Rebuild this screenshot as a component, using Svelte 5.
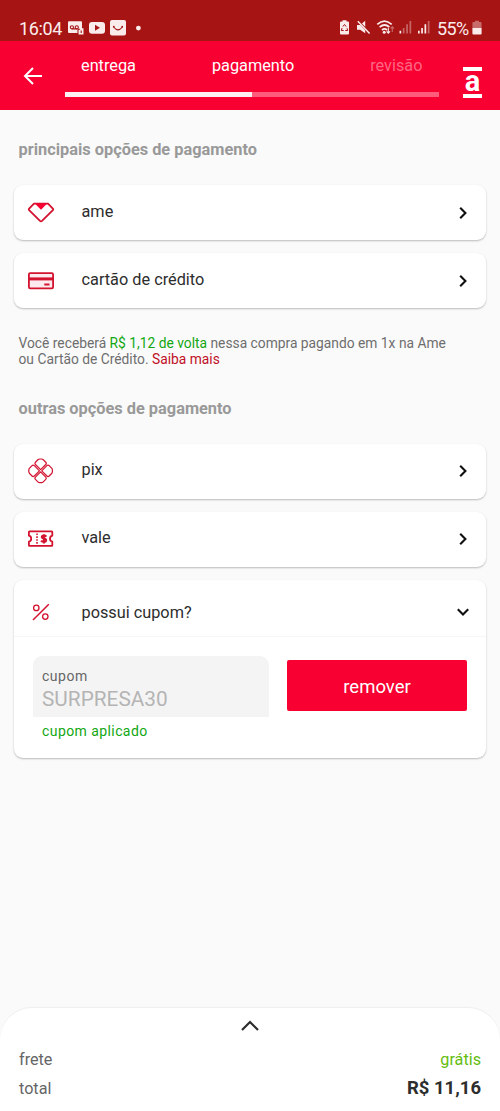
<script>
	let couponOpen = $state(true);

	const steps = [
		{ label: "entrega", done: true },
		{ label: "pagamento", done: true },
		{ label: "revisão", done: false }
	];

	const mainOptions = [
		{ icon: "ame", label: "ame" },
		{ icon: "card", label: "cartão de crédito" }
	];

	const otherOptions = [
		{ icon: "pix", label: "pix" },
		{ icon: "voucher", label: "vale" }
	];
</script>

{#snippet icon(name)}
	<svg class="icon" viewBox="0 0 28 28" fill="none" stroke="#d3122f" stroke-width="1.8" stroke-linejoin="round">
		{#if name === "ame"}
			<path d="M7 4.6h14l5.1 5.3q.4.7-.2 1.3L15 21.9q-1 .9-2 0L2.1 11.2q-.6-.6-.2-1.3z" />
			<path d="M7.8 4.6h12.4L14 10.8z" fill="#f80032" stroke="none" />
		{:else if name === "card"}
			<rect x="1.9" y="6.1" width="24.2" height="15.2" rx="1.3" fill="#fdeaee" />
			<path d="M2 11.9h24" stroke-width="3" />
			<path d="M17.3 17.5h5.2" stroke-width="2" />
		{:else if name === "pix"}
			<g transform="translate(13.6 13.8)" stroke-width="1.2">
				{#each [45, 135, 225, 315] as angle}
					<path
						transform="rotate({angle})"
						d="M.8.8h7.3Q9.7.8 9.7 2.4v3.5Q9.7 7 8.9 7.8L7.8 8.9Q7 9.7 5.9 9.7H2.4Q.8 9.7.8 8.1z"
					/>
				{/each}
			</g>
		{:else if name === "voucher"}
			<path d="M2.5 6.4h22.2q.6 0 .6.6v3.7q-2.3.6-2.3 3t2.3 3v3.6q0 .6-.6.6H2.5q-.6 0-.6-.6v-3.6q2.3-.6 2.3-3t-2.3-3V7q0-.6.6-.6z" />
			<path d="M10 8.4v11" stroke-width="1.6" stroke-dasharray="1.6 1.3" />
			<path d="M19.4 11.6q-1-1.1-2.7-1-2 .1-1.9 1.6.1 1.1 2 1.4 2.4.4 2.4 1.6-.1 1.6-2.3 1.6-1.9 0-2.8-1.2M16.9 9.2v9.2" stroke-width="2" />
		{:else if name === "percent"}
			<path d="M6 22 21.8 6.2" stroke-width="1.5" />
			<circle cx="9.3" cy="9.9" r="2.7" stroke-width="1.3" />
			<circle cx="18.3" cy="18.6" r="2.7" stroke-width="1.3" />
		{/if}
	</svg>
{/snippet}

{#snippet optionCard(option)}
	<button class="card option">
		{@render icon(option.icon)}
		<span class="option-label">{option.label}</span>
		<svg class="chevron" viewBox="0 0 14 14"><path d="m4.2 1.8 5.2 5.2-5.2 5.2" /></svg>
	</button>
{/snippet}

<div class="screen">
	<div class="status-bar">
		<span class="clock">16:04</span>
		<svg class="notifications" viewBox="0 0 76 18" fill="#fbecec">
			<path d="M2 2.2h12q1 0 1 1v6h1.5v6.2h-5v-1.3H2q-1 0-1-1v-10q0-.9 1-.9z" />
			<g fill="none" stroke="#a61414" stroke-width="1.1">
				<circle cx="4.9" cy="8.3" r="1.6" />
				<circle cx="9.8" cy="8.3" r="1.6" />
				<path d="M4.9 9.9h5M11 14v-3.7h2.1M14.2 11.4v2.6" />
			</g>
			<rect x="22" y="3" width="16" height="11.7" rx="3" />
			<path d="m28 5.8 5 3-5 3z" fill="#a61414" />
			<rect x="43" y="1" width="16" height="15.5" rx="2" />
			<path d="M46.6 8q4.4 5.6 8.8 0" fill="none" stroke="#a61414" stroke-width="1.2" />
			<circle cx="46.8" cy="7.7" r=".9" fill="#a61414" />
			<circle cx="55.2" cy="7.7" r=".9" fill="#a61414" />
			<circle cx="71.4" cy="9.1" r="2.4" />
		</svg>
		<svg class="indicators" viewBox="0 0 94 18" fill="#fbecec">
			<path d="M3.5 2.5V1.2h4v1.3H9q1 0 1 1v11q0 1-1 1H2q-1 0-1-1v-11q0-1 1-1z" />
			<path d="m3.9 7.5 1.6-2 1.7 2.1M8 9.2l.7 2.3H6.3M4.7 11.5H2.3L3.1 9" fill="none" stroke="#a61414" stroke-width="1" />
			<path d="M18 6h3.2l5-4.2v12.5l-5-3.6H18z" />
			<path d="m18.6 1.5 12 12.8" stroke="#a61414" stroke-width="2.4" />
			<path d="m18.8 2.3 11.8 12.3" stroke="#fbecec" stroke-width="1.5" />
			<g fill="none" stroke="#fbecec" stroke-width="1.7">
				<path d="M38.3 5.3q7-6.5 14.4 0M40.6 8.2q5-4.4 9.8 0M43 11q2.6-2.2 5 0" />
				<path d="M49.3 9v5M47.6 12.3l1.7 1.9 1.7-1.9" stroke-width="1.1" />
				<path d="M53.3 13V7.9M51.6 9.5l1.7-1.8L55 9.5" stroke-width="1.1" opacity=".4" />
			</g>
			<circle cx="45.2" cy="13.3" r="1.5" />
			<g opacity=".38">
				<path d="M63.8 9h1.7v5.6h-1.7zM67.2 5.3h1.7v9.3h-1.7zM70.5 2h1.7v12.6h-1.7zM88.8 2h1.7v12.6h-1.7z" />
			</g>
			<path d="M60.5 11.8h1.7v2.8h-1.7zM79 11.8h1.7v2.8H79zM82.2 9h1.7v5.6h-1.7zM85.5 5.3h1.7v9.3h-1.7z" />
		</svg>
		<span class="percent">55%</span>
		<svg class="battery" viewBox="0 0 10 16" fill="#fbecec">
			<path d="M3 1.9V.8h4v1.1h1.6q1 0 1 1v5H.4v-5q0-1 1-1z" opacity=".4" />
			<path d="M.4 7.9h9.2v5.7q0 1-1 1H1.4q-1 0-1-1z" />
		</svg>
	</div>

	<header class="top-bar">
		<button class="back" aria-label="voltar">
			<svg viewBox="0 0 20 20"><path d="M19 10H2M10 2l-8 8 8 8" /></svg>
		</button>
		<div class="progress">
			<div class="steps">
				{#each steps as step}
					<span class="step" class:pending={!step.done}>{step.label}</span>
				{/each}
			</div>
			<div class="track"><div class="fill"></div></div>
		</div>
		<div class="logo"><span>a</span></div>
	</header>

	<main>
		<h2>principais opções de pagamento</h2>
		<div class="cards">
			{#each mainOptions as option}
				{@render optionCard(option)}
			{/each}
		</div>

		<p class="cashback">
			Você receberá <span class="amount">R$ 1,12 de volta</span> nessa compra pagando em 1x na Ame<br />
			ou Cartão de Crédito. <a href="#mais">Saiba mais</a>
		</p>

		<h2>outras opções de pagamento</h2>
		<div class="cards">
			{#each otherOptions as option}
				{@render optionCard(option)}
			{/each}

			<section class="card coupon">
				<button class="option coupon-toggle" onclick={() => (couponOpen = !couponOpen)}>
					{@render icon("percent")}
					<span class="option-label">possui cupom?</span>
					<svg class="chevron" viewBox="0 0 14 14"><path d="M1.8 4.2 7 9.4l5.2-5.2" /></svg>
				</button>
				{#if couponOpen}
					<div class="coupon-body">
						<div class="field-group">
							<div class="field">
								<span class="field-label">cupom</span>
								<span class="field-value">SURPRESA30</span>
							</div>
							<span class="field-message">cupom aplicado</span>
						</div>
						<button class="remove">remover</button>
					</div>
				{/if}
			</section>
		</div>
	</main>

	<footer>
		<svg class="expand" viewBox="0 0 20 12"><path d="m2 10 8-8 8 8" /></svg>
		<div class="row">
			<span>frete</span>
			<span class="free">grátis</span>
		</div>
		<div class="row total">
			<span>total</span>
			<strong>R$ 11,16</strong>
		</div>
	</footer>
</div>

<style>
	:global(body) {
		background: #fafafa;
	}

	.screen {
		display: flex;
		flex-direction: column;
		width: 500px;
		height: 1111px;
		overflow: hidden;
		background: #fafafa;
		font-family: Roboto, "Liberation Sans", sans-serif;
		font-size: 16px;
		color: #2d2d2d;
	}

	button {
		margin: 0;
		padding: 0;
		border: 0;
		background: none;
		font: inherit;
		color: inherit;
		text-align: left;
	}

	svg {
		display: block;
		flex: none;
	}

	.status-bar {
		display: flex;
		align-items: center;
		box-sizing: border-box;
		height: 41px;
		padding: 15px 18px 0 19px;
		background: #a61414;
		color: #fbecec;
		font-size: 18px;
		line-height: 26px;
	}

	.clock {
		width: 48px;
		padding-top: 1px;
		letter-spacing: -0.35px;
	}

	.notifications {
		width: 76px;
		height: 18px;
	}

	.indicators {
		width: 94px;
		height: 18px;
		margin-left: auto;
	}

	.percent {
		width: 35px;
		padding-top: 1px;
		margin-left: 4px;
		letter-spacing: -0.6px;
	}

	.battery {
		width: 10px;
		height: 16px;
	}

	.top-bar {
		display: flex;
		height: 69px;
		flex: none;
		background: #f80032;
		color: #fff;
	}

	.back {
		width: 65px;
		padding: 0 0 0 22.5px;
		box-sizing: border-box;
	}

	.back svg {
		width: 20px;
		height: 20px;
		fill: none;
		stroke: #fff;
		stroke-width: 2;
	}

	.progress {
		width: 373.5px;
	}

	.steps {
		display: flex;
		justify-content: space-between;
		padding: 15px 16px 0;
		line-height: 20px;
		font-size: 16.3px;
	}

	.pending {
		color: #ff6683;
	}

	.track {
		height: 5px;
		margin-top: 16px;
		background: #ff5c7c;
	}

	.fill {
		width: 50%;
		height: 100%;
		background: #ffeef2;
	}

	.logo {
		box-sizing: border-box;
		width: 19px;
		height: 31px;
		margin: 26px 0 0 24.5px;
		border: solid #fff;
		border-width: 4px 0;
		font: bold 29px/20px Roboto, sans-serif;
		text-align: center;
	}

	main {
		flex: 1;
		padding: 30px 14px 0;
	}

	h2 {
		margin: 0 4.5px;
		font-size: 16.35px;
		line-height: 20px;
		font-weight: 700;
		color: #999;
	}

	.cards {
		display: flex;
		flex-direction: column;
		gap: 13px;
		margin-top: 25px;
	}

	.card {
		border-radius: 9px;
		background: #fff;
		box-shadow: 0 1px 2px rgba(0, 0, 0, 0.26);
	}

	.option {
		display: flex;
		align-items: center;
		box-sizing: border-box;
		width: 100%;
		height: 55px;
		padding: 0 16.5px 0 13px;
	}

	.icon {
		width: 28px;
		height: 28px;
	}

	.option-label {
		flex: 1;
		margin: 0 0 2px 26.5px;
		font-size: 16.3px;
		line-height: 20px;
	}

	.chevron {
		width: 14px;
		height: 14px;
		fill: none;
		stroke: #111;
		stroke-width: 2.1;
	}

	.cashback {
		margin: 27px 4.5px 31px;
		font-size: 13.8px;
		line-height: 16.4px;
		color: #6e6e6e;
	}

	.amount {
		color: #12a812;
	}

	.cashback a {
		color: #c01025;
		text-decoration: none;
	}

	.coupon {
		height: 178px;
	}

	.coupon-toggle {
		height: 57px;
		padding-top: 8px;
		border-bottom: 1px solid #f7f7f7;
	}

	.coupon-toggle .option-label {
		margin: 2px 0 0 26.5px;
	}

	.coupon-body {
		display: flex;
		gap: 18.5px;
		padding: 19px 19px 0;
	}

	.field-group {
		width: 235.5px;
	}

	.field {
		box-sizing: border-box;
		height: 61px;
		padding: 10px 9px 0;
		border-radius: 9px 9px 0 0;
		background: #f4f4f4;
	}

	.field-label,
	.field-value,
	.field-message {
		display: block;
	}

	.field-label {
		font-size: 14px;
		line-height: 20px;
		letter-spacing: 0.5px;
		color: #666;
	}

	.field-value {
		font-size: 20.8px;
		line-height: 26px;
		color: #b4b4b4;
	}

	.field-message {
		margin: 4px 9px 0;
		font-size: 14px;
		line-height: 20px;
		letter-spacing: 0.42px;
		color: #12a812;
	}

	.remove {
		flex: 1;
		height: 51px;
		padding-top: 3px;
		margin-top: 4px;
		border-radius: 2px;
		background: #f80032;
		color: #fff;
		font-size: 18.5px;
		text-align: center;
	}

	footer {
		box-sizing: border-box;
		height: 103px;
		flex: none;
		padding: 12px 19px 0;
		border-radius: 32px 32px 0 0;
		background: #fff;
		box-shadow: 0 -1px 1px rgba(0, 0, 0, 0.05);
	}

	.expand {
		width: 20px;
		height: 12px;
		margin: 0 auto 13px;
		fill: none;
		stroke: #2d2d2d;
		stroke-width: 2.2;
	}

	.row {
		display: flex;
		justify-content: space-between;
		align-items: center;
		height: 28px;
		font-size: 16.2px;
		color: #666;
	}

	.total {
		padding-top: 1px;
	}

	.free {
		color: #65bd10;
	}

	strong {
		font-size: 18.5px;
		color: #2d2d2d;
	}
</style>
